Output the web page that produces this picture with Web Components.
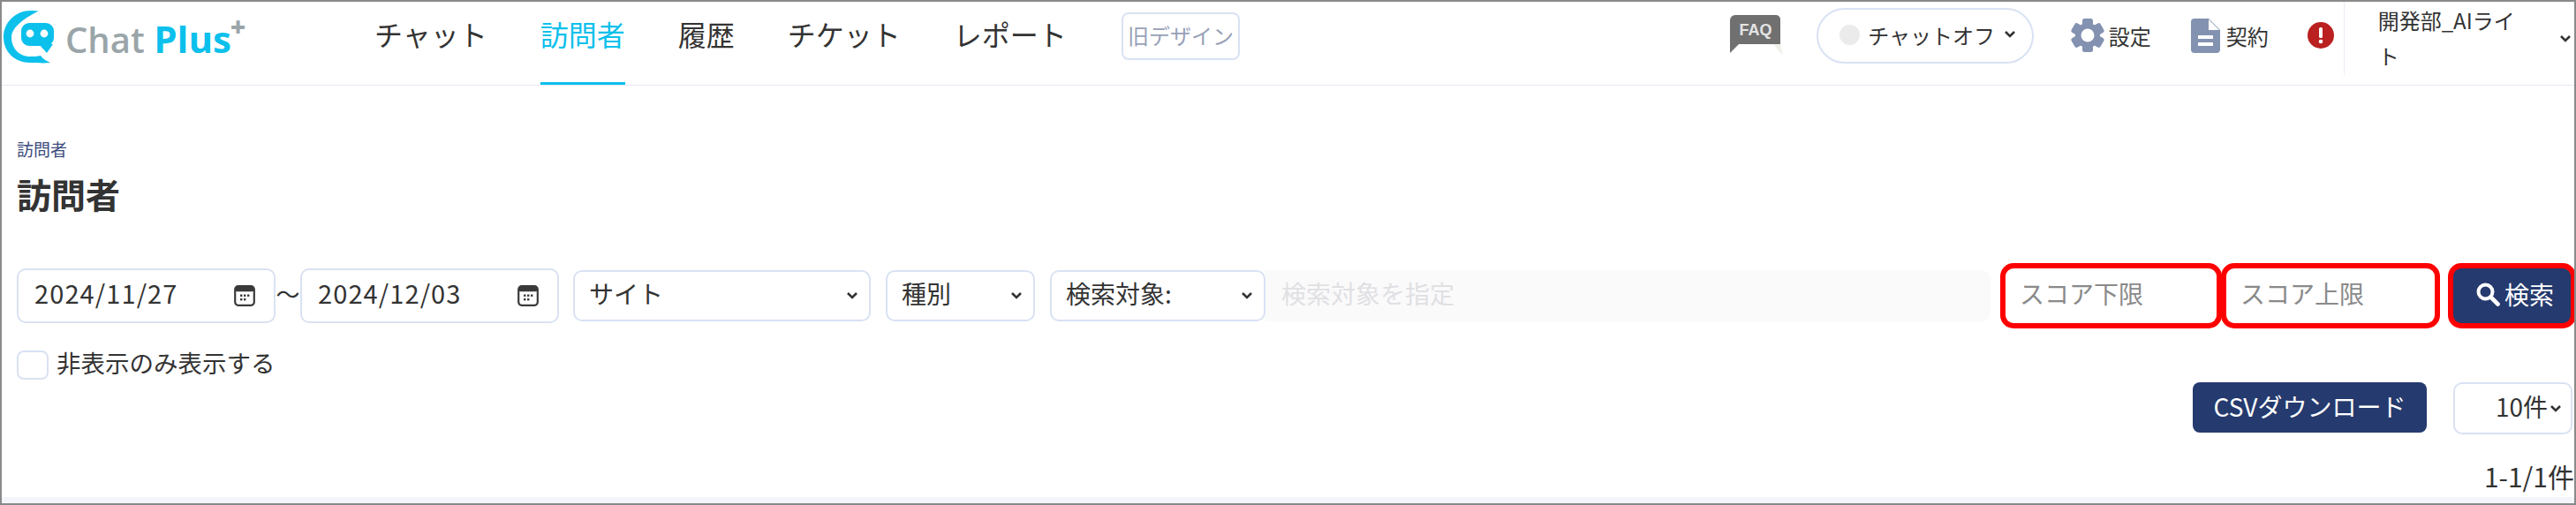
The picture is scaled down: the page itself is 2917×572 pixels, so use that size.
<!DOCTYPE html>
<html lang="ja">
<head>
<meta charset="utf-8">
<title>訪問者</title>
<style>
    html, body { margin: 0; padding: 0; background: #fff; }
    body { font-family: "Noto Sans CJK JP", "Noto Sans", sans-serif; color: #333; }
</style>
</head>
<body>
<cp-app></cp-app>
<script>
const CHEVRON = `<svg width="14" height="10" viewBox="0 0 14 10"><path d="M2 2l5 5 5-5" fill="none" stroke="#333" stroke-width="2.6"/></svg>`;

class CpLogo extends HTMLElement {
    connectedCallback() {
        this.attachShadow({ mode: "open" }).innerHTML = `
            <style>
                :host { display: flex; align-items: flex-start; width: 272px; height: 62px; position: relative; }
                svg { display: block; flex: none; }
                .name { font: 600 40px/44px "Open Sans", sans-serif; color: #9aa5a9; margin: 0 0 0 12px; padding-top: 8px; white-space: nowrap; }
                .plus { font-size: 42px; font-weight: 700; color: #0cc0ec; }
                sup { font: 800 30px/20px "Open Sans", sans-serif; color: #9aa5a9; vertical-align: 19px; margin-left: -1px; }
            </style>
            <svg width="58" height="60" viewBox="0 0 58 60">
                <path d="M40 .6C37 .2 34 0 31 0 14 0 0 13 0 30s13 29 30 29c7 0 15 1 23 0-5-2-9-5-11-8-4 1-8 1-12 1-13 0-21-10-21-22S28 6 40 .6z" fill="#0cc0ec"/>
                <rect x="20" y="14" width="37" height="26" rx="9" fill="#0cc0ec"/>
                <path d="M40 38h16l-7 10z" fill="#0cc0ec"/>
                <circle cx="30" cy="26" r="4.4" fill="#fff"/>
                <circle cx="46" cy="26" r="4.4" fill="#fff"/>
            </svg>
            <div class="name">Chat <span class="plus">Plus</span><sup>+</sup></div>
        `;
    }
}
customElements.define("cp-logo", CpLogo);

class CpNavItem extends HTMLElement {
    connectedCallback() {
        this.attachShadow({ mode: "open" }).innerHTML = `
            <style>
                :host { display: flex; align-items: center; box-sizing: border-box; height: 94px; padding-bottom: 22px; font-size: 32px; line-height: 40px; color: #333; white-space: nowrap; }
                :host([active]) { color: #0cc0ec; box-shadow: inset 0 -3px 0 #0cc0ec; }
            </style>
            <slot></slot>
        `;
    }
}
customElements.define("cp-nav-item", CpNavItem);

class CpHeader extends HTMLElement {
    connectedCallback() {
        this.attachShadow({ mode: "open" }).innerHTML = `
            <style>
                :host { display: flex; align-items: flex-start; height: 94px; background: #fff; border-bottom: 1px solid #e4e9f5; font-size: 24px; color: #333; flex: none; }
                cp-logo { margin: 10px 0 0 2px; }
                nav { display: flex; gap: 60px; margin-left: 148px; }
                .old { display: flex; align-items: center; justify-content: center; box-sizing: border-box; width: 135px; height: 54px; margin: 12px 0 0 62px; border: 2px solid #d9e2f3; border-radius: 8px; color: #98a1b8; font-size: 24px; padding-bottom: 3px; white-space: nowrap; }
                .faq { display: block; margin: 15px 0 0 555px; flex: none; }
                .pill { display: flex; align-items: center; box-sizing: border-box; width: 246px; height: 63px; margin: 7px 0 0 38px; padding: 0 0 3px 24px; border: 2px solid #d9e2f3; border-radius: 32px; white-space: nowrap; }
                .dot { width: 23px; height: 23px; border-radius: 50%; background: #ebebeb; margin-right: 9px; flex: none; }
                .pill svg { margin-left: 10px; }
                .tool { display: flex; align-items: center; gap: 5px; height: 40px; margin-top: 18px; white-space: nowrap; }
                .tool svg { display: block; flex: none; }
                .alert { display: block; margin: 23px 0 0 44px; flex: none; }
                .account { display: flex; align-items: center; box-sizing: border-box; width: 262px; height: 83px; margin: 0 0 0 11px; padding-left: 38px; border-left: 1px solid #e8ecf6; position: relative; }
                .account span { display: block; width: 164px; line-height: 40px; word-break: break-all; margin-top: -2px; }
                .account svg { margin-left: 41px; }
            </style>
            <cp-logo></cp-logo>
            <nav>
                <cp-nav-item>チャット</cp-nav-item>
                <cp-nav-item active>訪問者</cp-nav-item>
                <cp-nav-item>履歴</cp-nav-item>
                <cp-nav-item>チケット</cp-nav-item>
                <cp-nav-item>レポート</cp-nav-item>
            </nav>
            <div class="old">旧デザイン</div>
            <svg class="faq" width="60" height="46" viewBox="0 0 60 46">
                <path d="M10 33h47l3 13L49 33z" fill="#f1f0ea"/>
                <path d="M6 0h46a5 5 0 0 1 5 5v28H10L0 43V6a6 6 0 0 1 6-6z" fill="#707070"/>
                <text x="29" y="23" text-anchor="middle" font-family="Liberation Sans" font-weight="700" font-size="18" fill="#e4e4e4">FAQ</text>
            </svg>
            <div class="pill"><span class="dot"></span>チャットオフ${CHEVRON}</div>
            <div class="tool" style="margin-left:42px">
                <svg width="38" height="38" viewBox="0 0 38 38">
                    <g fill="#8492b1">
                        <circle cx="19" cy="19" r="14"/>
                        <rect x="13" y="0" width="12" height="38" rx="2.5"/>
                        <rect x="13" y="0" width="12" height="38" rx="2.5" transform="rotate(60 19 19)"/>
                        <rect x="13" y="0" width="12" height="38" rx="2.5" transform="rotate(120 19 19)"/>
                    </g>
                    <circle cx="19" cy="19" r="7.5" fill="#fff"/>
                </svg>
                <span>設定</span>
            </div>
            <div class="tool" style="margin-left:45px;gap:7px">
                <svg width="33" height="39" viewBox="0 0 33 39"><path fill="#8492b1" d="M4 0h16l13 13v22a4 4 0 0 1-4 4H4a4 4 0 0 1-4-4V4a4 4 0 0 1 4-4z"/><path fill="#fff" d="M20 1l12 12H20zM8 19h17v4H8zM8 27h17v4H8z"/></svg>
                <span>契約</span>
            </div>
            <svg class="alert" width="30" height="30" viewBox="0 0 30 30"><circle cx="15" cy="15" r="15" fill="#b9201f"/><rect x="13" y="6" width="4" height="12" rx="1.6" fill="#fff"/><circle cx="15" cy="22" r="2.3" fill="#fff"/></svg>
            <div class="account"><span>開発部_AIライト</span>${CHEVRON}</div>
        `;
    }
}
customElements.define("cp-header", CpHeader);

class CpDate extends HTMLElement {
    connectedCallback() {
        this.attachShadow({ mode: "open" }).innerHTML = `
            <style>
                :host { display: flex; align-items: center; justify-content: space-between; box-sizing: border-box; width: 293px; height: 62px; padding: 0 21px 0 18px; border: 2px solid #d9e2f3; border-radius: 10px; background: #fff; font-size: 29px; letter-spacing: 1.1px; color: #333; }
                span { display: block; margin-top: -8px; }
                svg { display: block; }
            </style>
            <span>${this.getAttribute("value")}</span>
            <svg width="24" height="24" viewBox="0 0 24 24">
                <rect x="1.2" y="1.2" width="21.6" height="21.6" rx="3.5" fill="#fff" stroke="#3a3a3a" stroke-width="2.2"/>
                <rect x="1.2" y="1.2" width="21.6" height="6" rx="2.5" fill="#3a3a3a"/>
                <g fill="#3a3a3a"><rect x="7" y="10.5" width="2.4" height="2.4"/><rect x="11" y="10.5" width="2.4" height="2.4"/><rect x="15" y="10.5" width="2.4" height="2.4"/><rect x="7" y="15" width="2.4" height="2.4"/><rect x="11" y="15" width="2.4" height="2.4"/></g>
            </svg>
        `;
    }
}
customElements.define("cp-date", CpDate);

class CpSelect extends HTMLElement {
    connectedCallback() {
        this.attachShadow({ mode: "open" }).innerHTML = `
            <style>
                :host { display: flex; align-items: center; justify-content: space-between; box-sizing: border-box; height: 58px; padding: 0 12px 0 16px; border: 2px solid #d9e2f3; border-radius: 10px; background: #fff; font-size: 28px; color: #333; white-space: nowrap; }
                span { display: block; margin-top: -6px; }
                svg { display: block; flex: none; }
            </style>
            <span><slot></slot></span>${CHEVRON}
        `;
    }
}
customElements.define("cp-select", CpSelect);

class CpField extends HTMLElement {
    connectedCallback() {
        this.attachShadow({ mode: "open" }).innerHTML = `
            <style>
                :host { display: flex; align-items: center; box-sizing: border-box; height: 58px; padding: 0 0 6px 16px; border-radius: 10px; background: #fff; font-size: 28px; color: #8a8a8a; white-space: nowrap; }
                :host([disabled]) { background: #fafafb; color: #e0e0e3; border-radius: 0 10px 10px 0; padding-left: 18px; }
                :host([marked]) { height: 62px; border-radius: 9px; box-shadow: 0 0 0 6px #f00; }
            </style>
            <slot></slot>
        `;
    }
}
customElements.define("cp-field", CpField);

class CpButton extends HTMLElement {
    connectedCallback() {
        this.attachShadow({ mode: "open" }).innerHTML = `
            <style>
                :host { display: flex; align-items: center; justify-content: center; gap: 5px; box-sizing: border-box; padding-bottom: 4px; border-radius: 8px; background: #253a6e; color: #fff; font-size: 28px; white-space: nowrap; }
                :host([marked]) { padding-left: 6px; border-radius: 9px; box-shadow: 0 0 0 6px #f00; }
            </style>
            <slot></slot>
        `;
    }
}
customElements.define("cp-button", CpButton);

class CpCheck extends HTMLElement {
    connectedCallback() {
        this.attachShadow({ mode: "open" }).innerHTML = `
            <style>
                :host { display: flex; align-items: center; gap: 9px; height: 33px; font-size: 27.5px; color: #333; white-space: nowrap; }
                i { display: block; box-sizing: border-box; width: 36px; height: 33px; border: 2px solid #d9e2f3; border-radius: 8px; }
                span { display: block; margin-top: -7px; }
            </style>
            <i></i><span><slot></slot></span>
        `;
    }
}
customElements.define("cp-check", CpCheck);

class CpApp extends HTMLElement {
    connectedCallback() {
        this.attachShadow({ mode: "open" }).innerHTML = `
            <style>
                :host { display: flex; flex-direction: column; box-sizing: border-box; width: 2917px; height: 572px; border: 2px solid #8a8a8a; background: #f3f5fb; overflow: hidden; font-family: "Noto Sans CJK JP", "Noto Sans", sans-serif; }
                main { flex: 1; display: flex; flex-direction: column; background: #fff; padding: 62px 0 0 17px; margin-bottom: 7px; }
                .crumb { font-size: 19px; line-height: 20px; color: #3d4d7c; }
                h1 { margin: 20px 0 0; font-size: 39px; line-height: 40px; font-weight: 700; color: #333; }
                .filters { display: flex; align-items: center; margin-top: 65px; }
                .tilde { width: 28px; text-align: center; font-size: 27px; color: #333; margin-top: -6px; }
                .right { display: flex; justify-content: flex-end; gap: 30px; margin: 3px 2px 0 0; }
                .count { margin-top: 32px; text-align: right; font-size: 30px; line-height: 30px; color: #333; white-space: nowrap; }
            </style>
            <cp-header></cp-header>
            <main>
                <div class="crumb">訪問者</div>
                <h1>訪問者</h1>
                <div class="filters">
                    <cp-date value="2024/11/27"></cp-date>
                    <span class="tilde">〜</span>
                    <cp-date value="2024/12/03"></cp-date>
                    <cp-select style="width:337px;margin-left:16px">サイト</cp-select>
                    <cp-select style="width:169px;margin-left:17px">種別</cp-select>
                    <cp-select style="width:244px;margin-left:17px">検索対象:</cp-select>
                    <cp-field disabled style="width:821px">検索対象を指定</cp-field>
                    <cp-field marked style="width:239px;margin-left:17px">スコア下限</cp-field>
                    <cp-field marked style="width:236px;margin-left:11px">スコア上限</cp-field>
                    <cp-button marked style="width:133px;height:62px;margin-left:21px">
                        <svg width="28" height="28" viewBox="0 0 28 28"><circle cx="11.5" cy="11.5" r="8" fill="none" stroke="#fff" stroke-width="4"/><path d="M17.5 17.5l8 8" stroke="#fff" stroke-width="4.6" stroke-linecap="round"/></svg>検索
                    </cp-button>
                </div>
                <cp-check style="margin-top:31px">非表示のみ表示する</cp-check>
                <div class="right">
                    <cp-button style="width:265px;height:57px">CSVダウンロード</cp-button>
                    <cp-select style="width:135px;height:59px;padding:0 10px 0 46px">10件</cp-select>
                </div>
                <div class="count">1-1/1件</div>
            </main>
        `;
    }
}
customElements.define("cp-app", CpApp);
</script>
</body>
</html>
